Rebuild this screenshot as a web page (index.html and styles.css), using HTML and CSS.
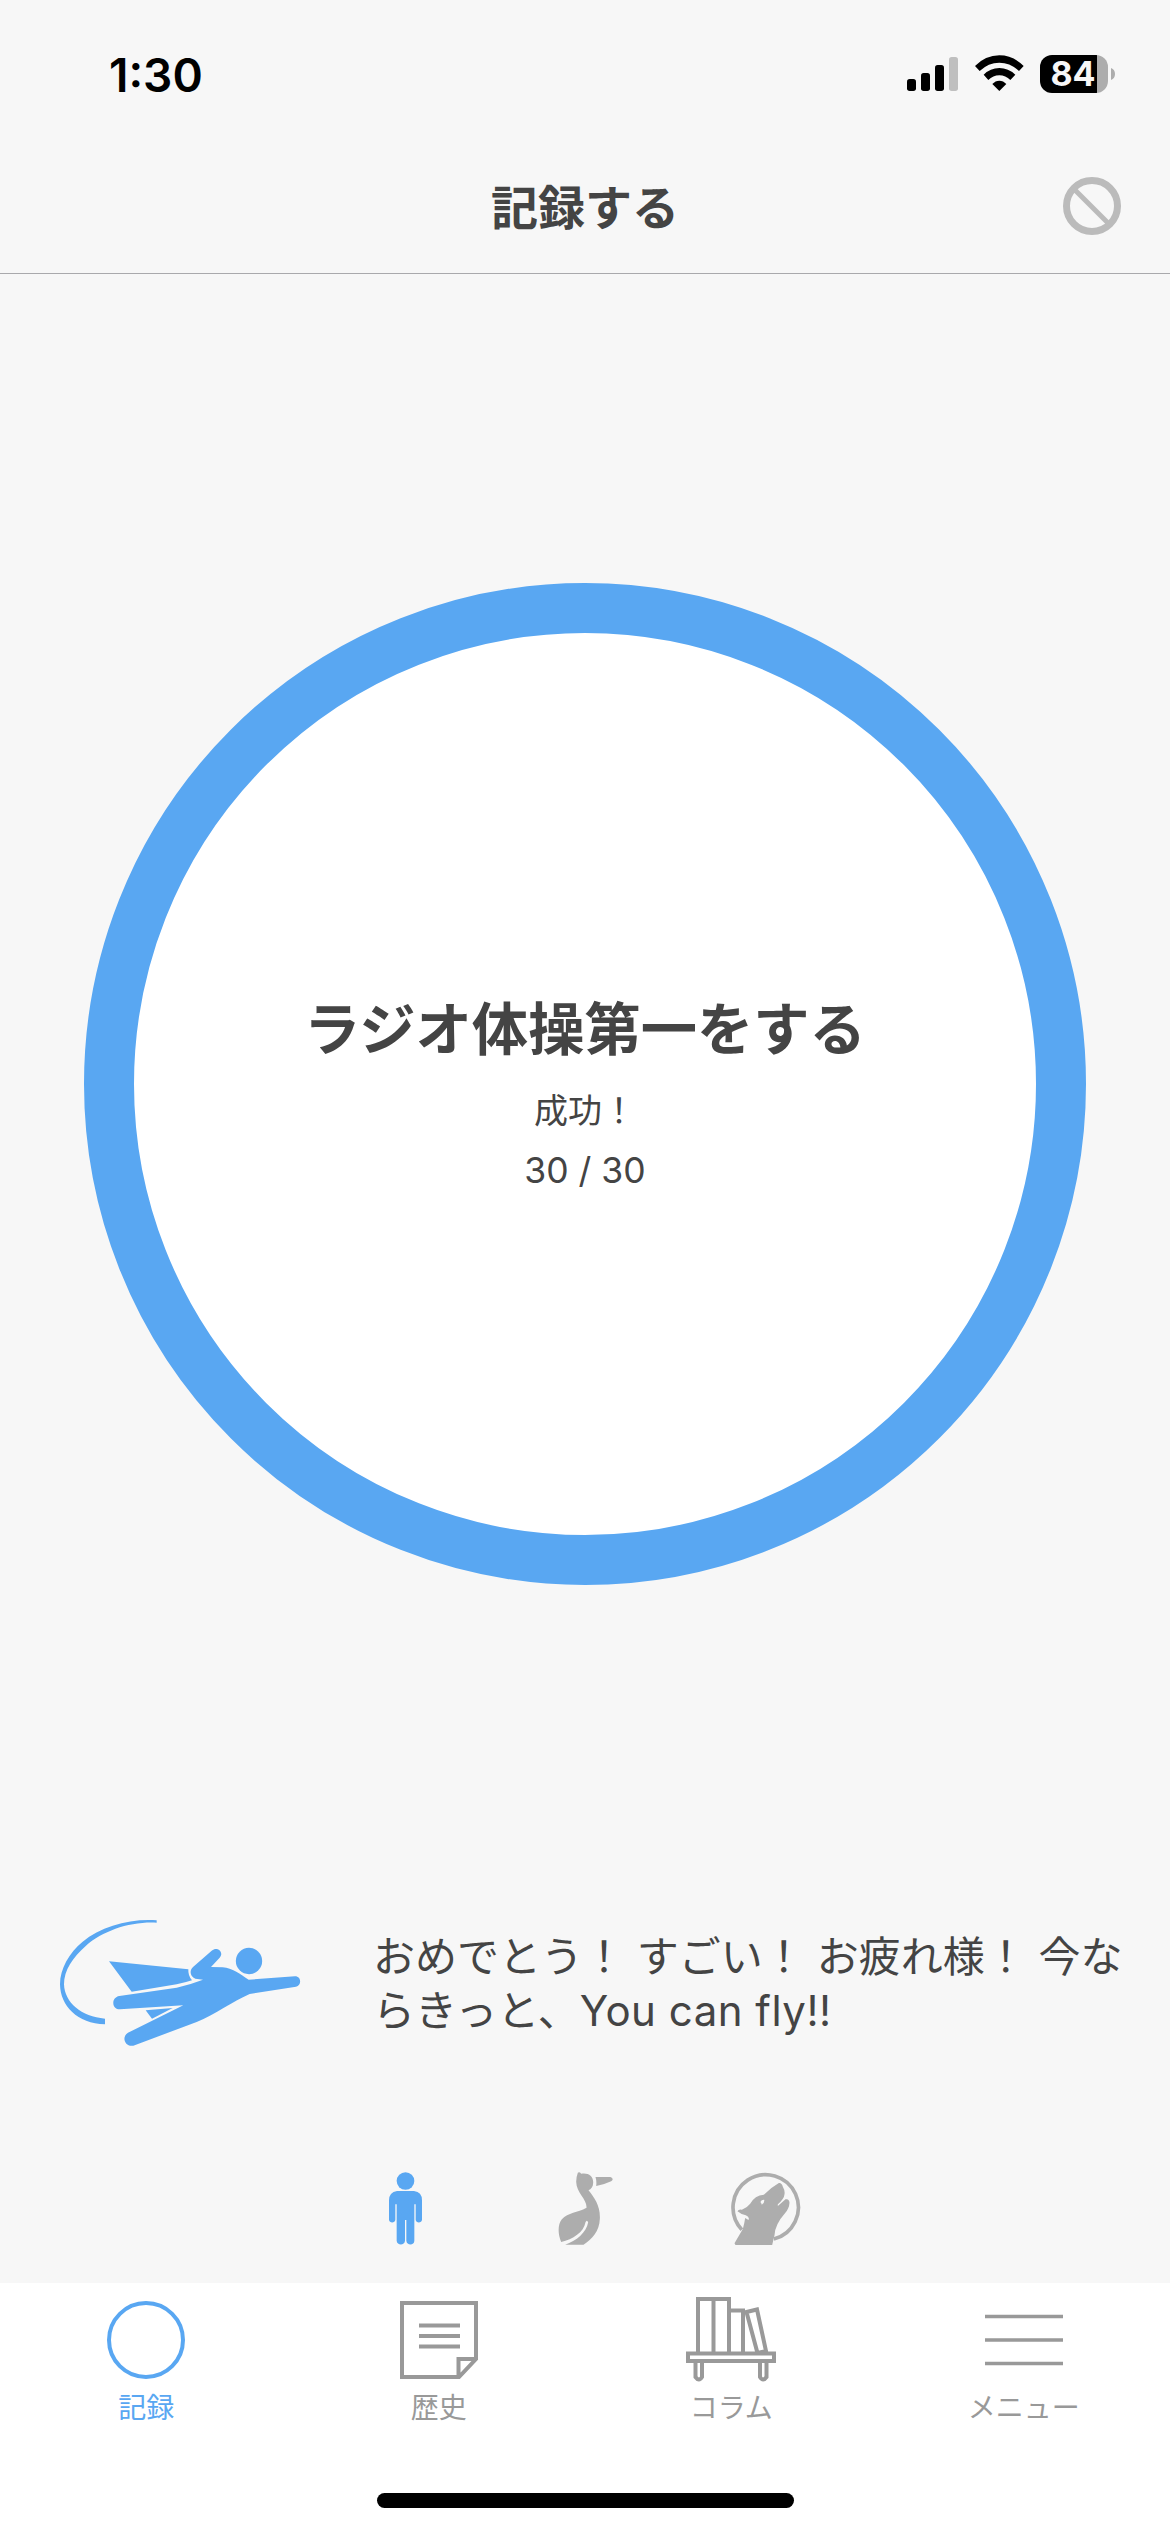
FILE: index.html
```html
<!DOCTYPE html>
<html lang="ja">
<head>
<meta charset="utf-8">
<title>記録する</title>
<link rel="stylesheet" href="styles.css">
</head>
<body>
<div class="screen">
  <div class="status">
    <span class="time">1:30</span>
    <div class="indicators">
      <svg class="signal" viewBox="0 0 156 102"><g><rect x="0" y="66" width="27" height="36" rx="8"/><rect x="42" y="48" width="27" height="54" rx="8"/><rect x="84" y="24" width="27" height="78" rx="8"/><rect x="126" y="0" width="27" height="102" rx="8" fill="#bfbfbf"/></g></svg>
      <svg class="wifi" viewBox="284 75 147 108"><path d="M284 108Q316 76 357 76T430 108L416 123Q390 98 357 98T298 123Z"/><path d="M310 134Q330 114 357 114T405 134L390 150Q376 136 357 136T324 150Z"/><path d="M336 162Q345 152 357 152T378 162L357 183Z"/></svg>
      <div class="battery"><span class="level">84</span><svg class="cap" viewBox="0 0 4 12"><path d="M0 0Q4 1.500 4 6T0 12Z"/></svg></div>
    </div>
  </div>
  <header class="nav">
    <h1>記録する</h1>
    <svg class="skip" viewBox="0 0 58 58"><circle cx="29" cy="29" r="25.500" stroke-width="7"/><path d="M11.500 12.500L45.500 46.500" stroke-width="5"/></svg>
  </header>
  <main class="stage">
    <div class="ring">
      <h2>ラジオ体操第一をする</h2>
      <p class="result">成功！</p>
      <p class="count">30 / 30</p>
    </div>
  </main>
  <section class="praise">
    <svg class="hero" viewBox="0 0 870 510">
      <path d="M350 61V68C270 64 190 92 138 137C98 172 72 211 72 253C74 308 124 350 195 356V373C112 371 61 318 60 253C60 207 88 157 128 125C183 80 270 55 350 61Z"/>
      <path d="M207 184L445 208Q444 228 456 241Q435 248 410 253L275 275Z"/>
      <path d="M317 331L398 324L336 356Z"/>
      <path d="M238 288L410 263Q450 254 489 239L466 236C450 230 447 211 460 200L515 152C533 138 553 157 539 173L513 201L548 202C578 204 598 222 626 239L765 229C785 229 785 257 768 260L629 282C580 303 525 344 470 366L430 381L280 437C255 442 243 411 264 398L430 316L240 328C214 328 213 292 238 288Z"/>
      <circle cx="627" cy="183" r="39.500"/>
    </svg>
    <p class="message">おめでとう！ すごい！ お疲れ様！ 今な<br>らきっと、<span class="latin">You can fly!!</span></p>
  </section>
  <div class="picker">
    <svg class="person" viewBox="87 66 99 219"><circle cx="136.500" cy="93" r="26.500"/><path d="M111 123H162Q186 126 186 151V209C185 220 168 220 167 209V163H163V272C163 287 140 287 139 272V210H135V272C134 287 111 287 110 272V163H106V209C105 220 88 220 87 209V151Q87 127 111 123Z"/></svg>
    <svg class="bird" viewBox="594 66 164 219"><path d="M653 68Q658 65 663 71C684 67 700 78 699 98C699 110 693 117 685 121C704 145 721 169 719 207C718 243 696 267 670 284H615C648 274 679 247 684 217Q680 208 676 217C671 247 638 268 603 276C593 253 592 224 605 208C624 187 652 188 679 173C681 147 649 130 648 95Q649 78 653 68Z"/><path d="M706 81H751Q763 87 753 94Q735 103 708 108Q710 94 706 81Z"/></svg>
    <svg class="wolf" viewBox="572 66 209 219"><path d="M604 239A98 98 0 1 1 700 267" fill="none" stroke="#adadad" stroke-width="11"/><path d="M582 280L607 237Q612 219 614 204L624 210Q628 201 616 196Q601 193 591 184Q594 177 604 179Q619 174 629 161Q643 136 670 134Q691 113 715 99Q723 97 727 110Q734 122 732 133Q731 147 712 163V168L735 148Q746 145 747 158Q746 175 734 189Q703 224 702 256L695 285H585Z"/><path d="M660 157Q661 149 671 149Q673 157 664 164Q662 158 660 157Z" fill="#f7f7f7"/></svg>
  </div>
  <nav class="tabs">
    <a class="tab active"><svg viewBox="0 0 90 90"><circle cx="45" cy="46" r="37"/></svg><span>記録</span></a>
    <a class="tab"><svg viewBox="0 0 90 90"><path d="M8 9H82V65L65 83H8ZM64.500 83V65H82M25 31.500H66M25 42H66M25 52.500H66"/></svg><span>歴史</span></a>
    <a class="tab"><svg viewBox="0 0 90 90"><path d="M2 59.500H88V67H2ZM12 59V5H43V59M27.500 5V59M43 16.500H57V59M60.500 18L71 15.500L80 57L71.500 59ZM9.500 67V83Q13 88 16 83V67M74 67V83Q77 88 80.500 83V67"/></svg><span>コラム</span></a>
    <a class="tab"><svg viewBox="0 0 90 90"><path d="M6 22.500H84M6 46H84M6 69.500H84" stroke-width="3.300"/></svg><span>メニュー</span></a>
  </nav>
  <div class="home"></div>
</div>
</body>
</html>
```
FILE: styles.css
```css
* { box-sizing: border-box; }
body { margin: 0; }
h1, h2, p { margin: 0; }
svg { display: block; flex: none; }
.screen {
  width: 1170px; height: 2532px; display: flex; flex-direction: column;
  background: #f7f7f7; color: #444;
  font-family: Inter, "Noto Sans CJK JP", sans-serif;
  overflow: hidden;
}
.status { height: 141px; display: flex; justify-content: space-between; padding: 55px 55px 0 109px; color: #000; }
.time { font-size: 46px; font-weight: 600; line-height: 40px; }
.indicators { display: flex; align-items: flex-start; }
.signal { width: 52px; height: 34px; margin: 2px 16px 0 0; }
.wifi { width: 49px; height: 36px; margin-right: 16px; }
.battery { display: flex; align-items: center; gap: 3px; }
.level {
  width: 68px; height: 38px; border-radius: 12px; padding-right: 2px;
  background: linear-gradient(to right, #000 57px, #adadad 57px);
  color: #f7f7f7; font-size: 34px; font-weight: 700; line-height: 38px; text-align: center;
}
.cap { width: 4px; height: 12px; fill: #adadad; }
.nav {
  height: 133px; display: grid; grid-template-columns: 1fr auto 1fr;
  padding: 36px 49px 0; border-bottom: 1px solid #a9a9ac;
}
.nav h1 { grid-column: 2; font-size: 47px; line-height: 62px; font-weight: 700; }
.skip { width: 58px; height: 58px; justify-self: end; fill: none; stroke: #bbb; }
.stage { height: 1626px; display: flex; justify-content: center; padding-top: 309px; }
.ring {
  width: 1002px; height: 1002px; border: 50px solid #59a7f2; border-radius: 50%;
  background: #fff; display: flex; flex-direction: column; align-items: center; padding-top: 355px;
}
.ring h2 { font-size: 56.3px; line-height: 84px; font-weight: 700; }
.result { font-size: 34px; line-height: 50px; margin-top: 14px; }
.count { font-size: 35.5px; line-height: 44px; margin-top: 13px; }
.praise { height: 272px; display: flex; padding-left: 40px; }
.hero { width: 290px; height: 170px; fill: #59a7f2; }
.message { margin: 30px 0 0 43px; font-size: 42px; line-height: 54px; white-space: nowrap; }
.latin { letter-spacing: 0.5px; }
.picker { height: 111px; display: flex; align-items: flex-start; padding-left: 389px; fill: #adadad; }
.person { width: 33px; height: 73px; fill: #59a7f2; margin-right: 136px; }
.bird { width: 55px; height: 73px; margin-right: 118px; }
.wolf { width: 70px; height: 73px; }
.tabs { height: 210px; display: grid; grid-template-columns: repeat(4, 1fr); background: #fff; }
.tab { display: flex; flex-direction: column; align-items: center; color: #999; padding-top: 11px; }
.tab.active { color: #59a7f2; }
.tab svg { width: 90px; height: 90px; fill: none; stroke: currentColor; stroke-width: 4; }
.tab span { font-size: 28px; line-height: 40px; margin-top: 4px; }
.home { height: 39px; background: #fff; }
.home::before { content: ""; display: block; width: 417px; height: 15px; margin: 0 auto; border-radius: 8px; background: #000; }
```
